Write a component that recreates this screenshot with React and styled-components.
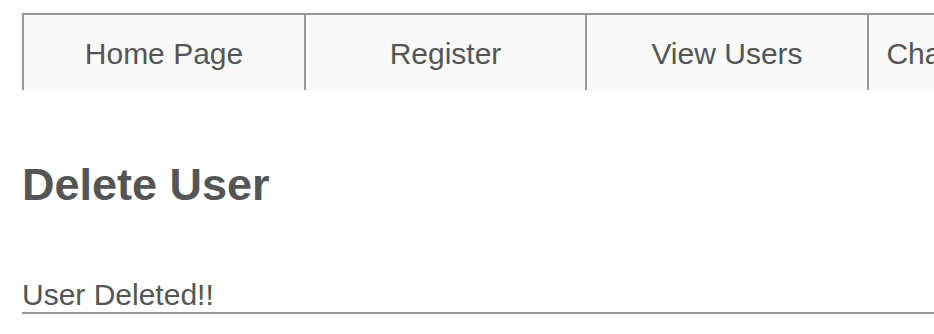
import React from "react"
import styled, { createGlobalStyle } from "styled-components"

const GlobalStyle = createGlobalStyle`
  html, body {
    margin: 0;
    padding: 0;
    background: #ffffff;
    overflow: hidden;
  }
  body {
    font-family: "Liberation Sans", Arial, sans-serif;
    color: #555555;
  }
`

const Page = styled.div`
  padding: 13px 0 0 22px;
  width: 1200px;
`

const NavBar = styled.nav`
  display: flex;
`

const NavItem = styled.a`
  box-sizing: border-box;
  width: ${(p) => p.$w}px;
  height: 77px;
  flex: none;
  display: flex;
  align-items: center;
  justify-content: center;
  padding-top: 3px;
  background: #f9f9f9;
  border-top: 2px solid #999999;
  border-left: 2px solid #999999;
  font-size: 30px;
  line-height: 1;
  color: #555555;
  text-decoration: none;
`

const Title = styled.h2`
  margin: 72px 0 0;
  font-size: 45px;
  line-height: 1;
  font-weight: bold;
  color: #555555;
`

const Message = styled.p`
  margin: 73px 0 0;
  width: 930px;
  font-size: 30px;
  line-height: 1;
  padding-bottom: 2px;
  border-bottom: 2px solid #999999;
`

const links = [
  { label: "Home Page", w: 282 },
  { label: "Register", w: 281 },
  { label: "View Users", w: 282 },
  { label: "Change Password", w: 282 },
]

export default function App() {
  return (
    <>
      <GlobalStyle />
      <Page>
        <NavBar>
          {links.map((l) => (
            <NavItem key={l.label} href="#" $w={l.w}>{l.label}</NavItem>
          ))}
        </NavBar>
        <Title>Delete User</Title>
        <Message>User Deleted!!</Message>
      </Page>
    </>
  )
}
